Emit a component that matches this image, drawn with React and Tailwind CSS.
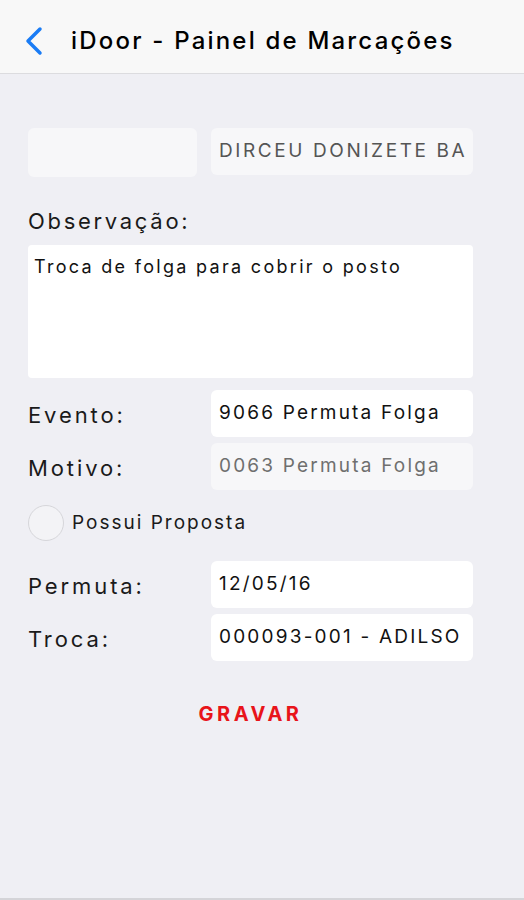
import React from 'react';

function Field({ value, muted, className }) {
    return (
        <div
            className={
                'h-[47px] rounded-md flex items-center px-2 text-[19px] whitespace-nowrap overflow-hidden ' +
                (muted ? 'bg-[#f7f7f9] text-[#6f6f6f] ' : 'bg-white text-[#111] ') +
                (className || 'tracking-[2.2px]')
            }
        >
            {value}
        </div>
    );
}

function Row({ label, children }) {
    return (
        <div className="flex items-center">
            <div className="w-[183px] shrink-0 text-[22px] tracking-[2.9px] text-[#1a1a1a] pt-1">{label}</div>
            <div className="flex-1 min-w-0">{children}</div>
        </div>
    );
}

export default function App() {
    return (
        <div
            className="w-[524px] h-[900px] bg-[#efeff4] flex flex-col border-b-2 border-[#d4d4d8]"
            style={{ fontFamily: 'Inter, "Liberation Sans", sans-serif' }}
        >
            {/* Nav bar */}
            <div className="h-[74px] bg-[#f8f8f8] border-b border-[#dcdcdf] flex items-center pt-[8px]">
                <svg width="20" height="30" viewBox="0 0 20 30" className="ml-[24px] mr-[27px]">
                    <path d="M16 3 L4 15 L16 27" fill="none" stroke="#1a7cf5" strokeWidth="3.5" strokeLinecap="round" strokeLinejoin="round" />
                </svg>
                <h1 className="text-[24px] font-medium text-black tracking-[2.2px]">iDoor - Painel de Marcações</h1>
            </div>

            <div className="pl-[28px] pr-[51px] pt-[54px] flex flex-col">
                <div className="flex gap-[14px]">
                    <div className="w-[169px] shrink-0 h-[49px] rounded-md bg-[#f7f7f9]" />
                    <Field value="DIRCEU DONIZETE BA" muted className="flex-1 min-w-0 text-[#555] tracking-[2.6px]" />
                </div>

                <div className="mt-[28px] text-[22px] tracking-[2.7px] text-[#1a1a1a]">Observação:</div>
                <div className="mt-[7px] h-[133px] bg-white rounded-sm px-[6px] pt-[8px] text-[18px] tracking-[2.3px] text-[#111]">
                    Troca de folga para cobrir o posto
                </div>

                <div className="mt-[12px] flex flex-col gap-[6px]">
                    <Row label="Evento:"><Field value="9066 Permuta Folga" /></Row>
                    <Row label="Motivo:"><Field value="0063 Permuta Folga" muted /></Row>
                </div>

                <div className="mt-[15px] flex items-center gap-[8px]">
                    <div className="w-[36px] h-[36px] rounded-full border border-[#d6d6da] bg-[#f3f3f6]" />
                    <span className="text-[19px] tracking-[2px] text-[#1a1a1a]">Possui Proposta</span>
                </div>

                <div className="mt-[20px] flex flex-col gap-[6px]">
                    <Row label="Permuta:"><Field value="12/05/16" /></Row>
                    <Row label="Troca:"><Field value="000093-001 - ADILSO" className="tracking-[2.2px]" /></Row>
                </div>

                <div className="mt-[38px] text-center text-[20px] font-bold text-[#e8141a] tracking-[3.5px]">GRAVAR</div>
            </div>
        </div>
    );
}
